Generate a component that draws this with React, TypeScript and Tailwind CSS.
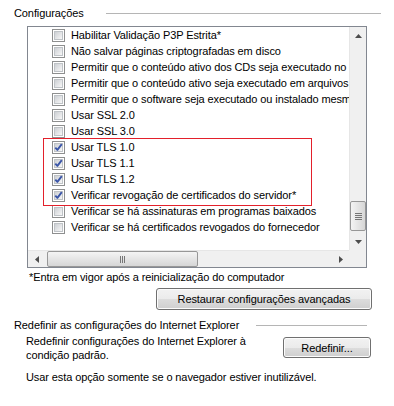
import React from 'react';

const items: { label: string; checked?: boolean }[] = [
  { label: 'Habilitar Validação P3P Estrita*' },
  { label: 'Não salvar páginas criptografadas em disco' },
  { label: 'Permitir que o conteúdo ativo dos CDs seja executado no computador' },
  { label: 'Permitir que o conteúdo ativo seja executado em arquivos do computador' },
  { label: 'Permitir que o software seja executado ou instalado mesmo se a assinatura for inválida' },
  { label: 'Usar SSL 2.0' },
  { label: 'Usar SSL 3.0' },
  { label: 'Usar TLS 1.0', checked: true },
  { label: 'Usar TLS 1.1', checked: true },
  { label: 'Usar TLS 1.2', checked: true },
  { label: 'Verificar revogação de certificados do servidor*', checked: true },
  { label: 'Verificar se há assinaturas em programas baixados' },
  { label: 'Verificar se há certificados revogados do fornecedor' },
];

const CheckBox = ({ checked }: { checked?: boolean }) => (
  <div className="relative w-[13px] h-[13px] shrink-0 border border-[#8e8f8f] bg-white p-[1px]">
    <div className="w-full h-full border border-[#bfc3c7] bg-gradient-to-br from-[#cdd0d4] to-[#f7f7f7]" />
    {checked && (
      <svg className="absolute left-0 top-0" width="11" height="11" viewBox="0 0 11 11">
        <path d="M2.3 5.6 L4.4 7.9 L8.8 2.2" fill="none" stroke="#3b56a8" strokeWidth="1.9" strokeLinejoin="round" />
      </svg>
    )}
  </div>
);

const Arrow = ({ dir }: { dir: 'up' | 'down' | 'left' | 'right' }) => {
  const paths = {
    up: 'M0 4 L3.5 0 L7 4 Z',
    down: 'M0 0 L7 0 L3.5 4 Z',
    left: 'M4 0 L4 7 L0 3.5 Z',
    right: 'M0 0 L4 3.5 L0 7 Z',
  };
  const vertical = dir === 'up' || dir === 'down';
  return (
    <div className="w-[17px] h-[17px] shrink-0 flex items-center justify-center">
      <svg width={vertical ? 7 : 4} height={vertical ? 4 : 7} viewBox={vertical ? '0 0 7 4' : '0 0 4 7'}>
        <path d={paths[dir]} fill="#4d4d4d" />
      </svg>
    </div>
  );
};

const WinButton = ({ children, className }: { children: React.ReactNode; className: string }) => (
  <button
    className={`flex items-center justify-center rounded-[3px] border border-[#707070] shadow-[inset_0_0_0_1px_#fcfcfc] bg-[linear-gradient(to_bottom,#f2f2f2_0%,#ebebeb_50%,#dddddd_50%,#cfcfcf_100%)] text-black ${className}`}
  >
    {children}
  </button>
);

export default function App() {
  return (
    <div className="w-[394px] h-[406px] bg-white text-black text-[11px] leading-[14px] tracking-[-0.1px] font-['Liberation_Sans',sans-serif] overflow-hidden">
      {/* Configurações header */}
      <div className="flex items-center pt-[6px] pr-[13px] h-[20px]">
        <div className="w-[106px] pl-[14px] shrink-0">Configurações</div>
        <div className="flex-1 h-px bg-[#b5b5b5]" />
      </div>

      {/* Tree list */}
      <div className="ml-[27px] mt-[6px] w-[340px] h-[242px] border border-[#828790] grid grid-cols-[321px_17px] grid-rows-[223px_17px]">
        <div className="relative overflow-hidden whitespace-nowrap">
          {items.map((item) => (
            <div key={item.label} className="flex items-center h-[16px] pl-[24px]">
              <CheckBox checked={item.checked} />
              <span className="ml-[6px]">{item.label}</span>
            </div>
          ))}
          <div className="absolute left-[15px] top-[111px] w-[269px] h-[68px] border border-[#e3202b]" />
        </div>

        {/* vertical scrollbar */}
        <div className="flex flex-col bg-[#f0f0f0] border-l border-[#e6e6e6]">
          <Arrow dir="up" />
          <div className="mt-[157px] mx-auto w-[16px] h-[30px] rounded-[2px] border border-[#979797] bg-gradient-to-r from-[#f4f4f4] to-[#d6d6d6] flex flex-col items-center justify-center gap-[1px]">
            <div className="w-[7px] h-px bg-[#767676]" />
            <div className="w-[7px] h-px bg-[#767676]" />
            <div className="w-[7px] h-px bg-[#767676]" />
            <div className="w-[7px] h-px bg-[#767676]" />
          </div>
          <div className="mt-auto">
            <Arrow dir="down" />
          </div>
        </div>

        {/* horizontal scrollbar */}
        <div className="flex items-center bg-[#f0f0f0] border-t border-[#e6e6e6]">
          <Arrow dir="left" />
          <div className="ml-[2px] w-[151px] h-[16px] rounded-[2px] border border-[#979797] bg-gradient-to-b from-[#f4f4f4] to-[#d6d6d6] flex items-center justify-center gap-[1px]">
            <div className="w-px h-[7px] bg-[#767676]" />
            <div className="w-px h-[7px] bg-[#767676]" />
            <div className="w-px h-[7px] bg-[#767676]" />
          </div>
          <div className="ml-auto">
            <Arrow dir="right" />
          </div>
        </div>
        <div className="bg-[#f0f0f0]" />
      </div>

      <div className="pl-[29px] mt-[2px]">*Entra em vigor após a reinicialização do computador</div>

      <WinButton className="ml-[156px] mt-[4px] w-[216px] h-[22px]">Restaurar configurações avançadas</WinButton>

      {/* Redefinir header */}
      <div className="flex items-center mt-[8px] pr-[27px] h-[14px]">
        <div className="w-[256px] pl-[14px] shrink-0 whitespace-nowrap">Redefinir as configurações do Internet Explorer</div>
        <div className="flex-1 h-px bg-[#b5b5b5]" />
      </div>

      <div className="flex items-start pl-[26px] mt-[2px]">
        <div className="w-[257px] shrink-0">
          Redefinir configurações do Internet Explorer à
          <br />
          condição padrão.
        </div>
        <WinButton className="mt-[3px] w-[88px] h-[21px]">Redefinir...</WinButton>
      </div>

      <div className="pl-[26px] mt-[8px]">Usar esta opção somente se o navegador estiver inutilizável.</div>
    </div>
  );
}
